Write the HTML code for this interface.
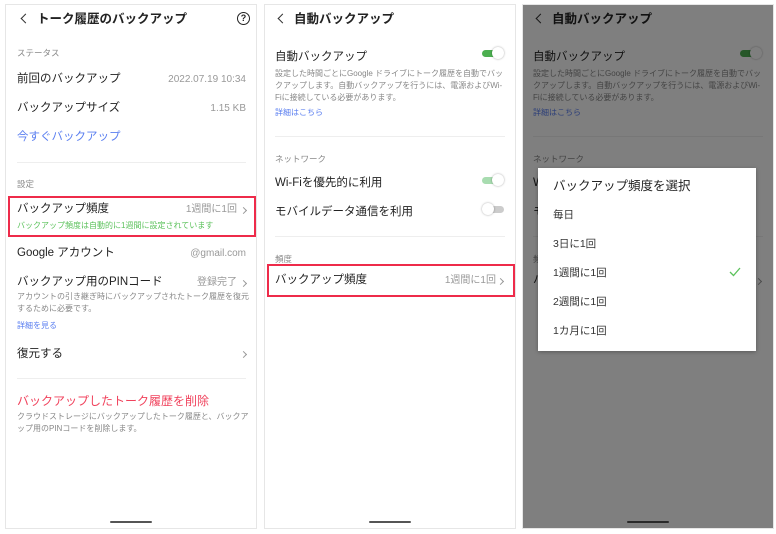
<!DOCTYPE html>
<html><head><meta charset="utf-8"><style>
*{margin:0;padding:0;box-sizing:border-box}
body{width:776px;height:534px;background:#fff;position:relative;overflow:hidden;font-family:"Liberation Sans","Noto Sans CJK JP",sans-serif;color:#222}
.p{position:absolute;top:4px;width:252px;height:525px;border:1px solid #e6e6e6;background:#fff;overflow:hidden}
.t{position:absolute;white-space:nowrap;line-height:1}
.h{font-size:12.5px;font-weight:bold;color:#222}
.s{font-size:8.5px;color:#888}
.m{font-size:11.5px;color:#222}
.r{font-size:10px;color:#999;text-align:right}
.d{font-size:8px;color:#888;line-height:12px;white-space:normal}
.dv{position:absolute;height:1px;background:#eee}
.chev{position:absolute;width:7px;height:7px;border-left:1.6px solid #333;border-bottom:1.6px solid #333;transform:rotate(45deg)}
.ar{position:absolute;width:5px;height:5px;border-right:1px solid #999;border-top:1px solid #999;transform:rotate(45deg)}
.box{position:absolute;border:2px solid #ee2b4a}
.tg{position:absolute;width:22px;height:12px}
.tg .tr{position:absolute;left:0;top:3px;width:18px;height:7px;border-radius:4px}
.tg .kn{position:absolute;right:0;top:0;width:12px;height:12px;border-radius:50%;background:#fff;box-shadow:0 0 2px rgba(0,0,0,.35)}
.bar{position:absolute;bottom:5px;left:104px;width:42px;height:2px;background:#555;border-radius:1px}
.dl{font-size:10.5px;color:#333}
</style></head><body>

<!-- Panel 1 -->
<div class="p" style="left:5px">
<div class="chev" style="left:16px;top:10px"></div>
<div class="t h" style="left:31px;top:8px">トーク履歴のバックアップ</div>
<div style="position:absolute;left:231px;top:7px;width:13px;height:13px;border:1.4px solid #222;border-radius:50%;font-size:9px;font-weight:bold;text-align:center;line-height:11px">?</div>
<div class="t s" style="left:11px;top:44px">ステータス</div>
<div class="t m" style="left:11px;top:69px">前回のバックアップ</div>
<div class="t r" style="right:10px;top:70px">2022.07.19 10:34</div>
<div class="t m" style="left:11px;top:98px">バックアップサイズ</div>
<div class="t r" style="right:10px;top:99px">1.15 KB</div>
<div class="t m" style="left:11px;top:127px;color:#5b7ff0">今すぐバックアップ</div>
<div class="dv" style="left:11px;right:10px;top:157px"></div>
<div class="t s" style="left:11px;top:175px">設定</div>
<div class="box" style="left:2px;top:191px;width:248px;height:41px"></div>
<div class="t m" style="left:11px;top:199px">バックアップ頻度</div>
<div class="t r" style="right:19px;top:200px">1週間に1回</div>
<div class="ar" style="left:235px;top:203px"></div>
<div class="t" style="left:11px;top:217px;font-size:8px;color:#5cc25c">バックアップ頻度は自動的に1週間に設定されています</div>
<div class="t m" style="left:11px;top:243px">Google アカウント</div>
<div class="t r" style="right:10px;top:244px">@gmail.com</div>
<div class="t m" style="left:11px;top:272px">バックアップ用のPINコード</div>
<div class="t r" style="right:19px;top:273px">登録完了</div>
<div class="ar" style="left:235px;top:276px"></div>
<div class="t d" style="left:11px;top:286px;width:232px">アカウントの引き継ぎ時にバックアップされたトーク履歴を復元するために必要です。</div>
<div class="t" style="left:11px;top:317px;font-size:8px;color:#5b7ff0">詳細を見る</div>
<div class="t m" style="left:11px;top:344px">復元する</div>
<div class="ar" style="left:235px;top:347px"></div>
<div class="dv" style="left:11px;right:10px;top:373px"></div>
<div class="t" style="left:11px;top:390px;font-size:12px;color:#f0425c">バックアップしたトーク履歴を削除</div>
<div class="t d" style="left:11px;top:406px;width:232px">クラウドストレージにバックアップしたトーク履歴と、バックアップ用のPINコードを削除します。</div>
<div class="bar"></div>
</div>

<!-- Panel 2 & 3 template -->
<div class="p" style="left:264px" id="p2">
<div class="chev" style="left:14px;top:10px"></div>
<div class="t h" style="left:29px;top:8px">自動バックアップ</div>
<div class="t m" style="left:10px;top:47px">自動バックアップ</div>
<div class="tg" style="left:217px;top:42px"><div class="tr" style="background:#4caf50"></div><div class="kn"></div></div>
<div class="t d" style="left:10px;top:63px;width:232px">設定した時間ごとにGoogle ドライブにトーク履歴を自動でバックアップします。自動バックアップを行うには、電源およびWi-Fiに接続している必要があります。</div>
<div class="t" style="left:10px;top:104px;font-size:8px;color:#5b7ff0">詳細はこちら</div>
<div class="dv" style="left:10px;right:10px;top:131px"></div>
<div class="t s" style="left:10px;top:150px">ネットワーク</div>
<div class="t m" style="left:10px;top:173px">Wi-Fiを優先的に利用</div>
<div class="tg" style="left:217px;top:169px"><div class="tr" style="background:#a8dcb0"></div><div class="kn"></div></div>
<div class="t m" style="left:10px;top:202px">モバイルデータ通信を利用</div>
<div class="tg" style="left:217px;top:198px"><div class="tr" style="background:#ccc;left:4px"></div><div class="kn" style="left:0;right:auto"></div></div>
<div class="dv" style="left:10px;right:10px;top:231px"></div>
<div class="t s" style="left:10px;top:250px">頻度</div>
<div class="box" style="left:2px;top:259px;width:248px;height:33px"></div>
<div class="t m" style="left:10px;top:270px">バックアップ頻度</div>
<div class="t r" style="right:19px;top:271px">1週間に1回</div>
<div class="ar" style="left:233px;top:274px"></div>
<div class="bar"></div>
</div>

<div class="p" style="left:522px">
<div class="chev" style="left:14px;top:10px"></div>
<div class="t h" style="left:29px;top:8px">自動バックアップ</div>
<div class="t m" style="left:10px;top:47px">自動バックアップ</div>
<div class="tg" style="left:217px;top:42px"><div class="tr" style="background:#4caf50"></div><div class="kn"></div></div>
<div class="t d" style="left:10px;top:63px;width:232px">設定した時間ごとにGoogle ドライブにトーク履歴を自動でバックアップします。自動バックアップを行うには、電源およびWi-Fiに接続している必要があります。</div>
<div class="t" style="left:10px;top:104px;font-size:8px;color:#5b7ff0">詳細はこちら</div>
<div class="dv" style="left:10px;right:10px;top:131px"></div>
<div class="t s" style="left:10px;top:150px">ネットワーク</div>
<div class="t m" style="left:10px;top:173px">Wi-Fiを優先的に利用</div>
<div class="t m" style="left:10px;top:202px">モバイルデータ通信を利用</div>
<div class="dv" style="left:10px;right:10px;top:231px"></div>
<div class="t s" style="left:10px;top:250px">頻度</div>
<div class="t m" style="left:10px;top:270px">バックアップ頻度</div>
<div class="ar" style="left:233px;top:274px"></div>
<div class="bar"></div>
<div style="position:absolute;inset:0;background:rgba(0,0,0,0.5)"></div>
</div>

<div style="position:absolute;left:538px;top:168px;width:218px;height:183px;background:#fff;box-shadow:0 1px 4px rgba(0,0,0,.3)">
<div class="t" style="left:15px;top:12px;font-size:12.5px;color:#222">バックアップ頻度を選択</div>
<div class="t dl" style="left:15px;top:42px">毎日</div>
<div class="t dl" style="left:15px;top:71px">3日に1回</div>
<div class="t dl" style="left:15px;top:100px">1週間に1回</div>
<svg style="position:absolute;left:191px;top:99px" width="12" height="10" viewBox="0 0 12 10"><path d="M1 5 L4.5 8.5 L11 1" fill="none" stroke="#5cc25c" stroke-width="1.3"/></svg>
<div class="t dl" style="left:15px;top:129px">2週間に1回</div>
<div class="t dl" style="left:15px;top:158px">1カ月に1回</div>
</div>
</body></html>
